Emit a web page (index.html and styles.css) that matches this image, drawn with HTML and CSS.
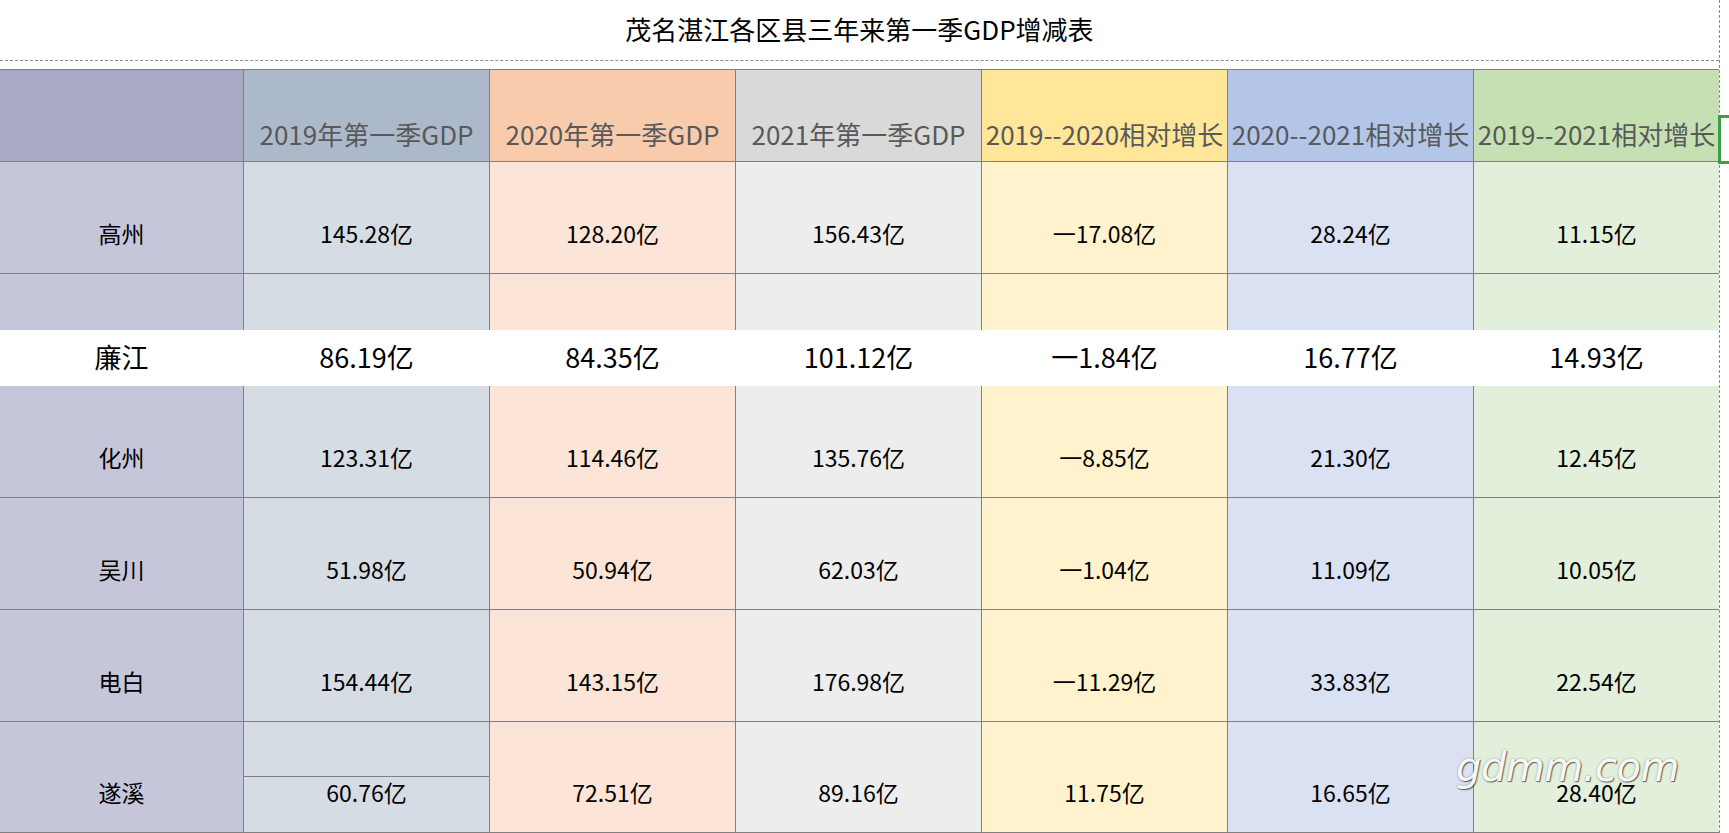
FILE: index.html
```html
<!DOCTYPE html>
<html lang="zh-CN">
<head>
<meta charset="utf-8">
<title>茂名湛江各区县三年来第一季GDP增减表</title>
<link rel="stylesheet" href="styles.css">
</head>
<body>
<div class="sheet">
  <div class="title">茂名湛江各区县三年来第一季GDP增减表</div>
  <div class="table">
    <div class="row head">
      <div class="cell c0"></div>
      <div class="cell c1">2019年第一季GDP</div>
      <div class="cell c2">2020年第一季GDP</div>
      <div class="cell c3">2021年第一季GDP</div>
      <div class="cell c4">2019--2020相对增长</div>
      <div class="cell c5">2020--2021相对增长</div>
      <div class="cell c6">2019--2021相对增长</div>
    </div>
    <div class="row data">
      <div class="cell c0">高州</div>
      <div class="cell c1">145.28亿</div>
      <div class="cell c2">128.20亿</div>
      <div class="cell c3">156.43亿</div>
      <div class="cell c4">一17.08亿</div>
      <div class="cell c5">28.24亿</div>
      <div class="cell c6">11.15亿</div>
    </div>
    <div class="row half">
      <div class="cell c0"></div>
      <div class="cell c1"></div>
      <div class="cell c2"></div>
      <div class="cell c3"></div>
      <div class="cell c4"></div>
      <div class="cell c5"></div>
      <div class="cell c6"></div>
    </div>
    <div class="band">
      <div class="bcell">廉江</div>
      <div class="bcell">86.19亿</div>
      <div class="bcell">84.35亿</div>
      <div class="bcell">101.12亿</div>
      <div class="bcell">一1.84亿</div>
      <div class="bcell">16.77亿</div>
      <div class="bcell">14.93亿</div>
    </div>
    <div class="row data">
      <div class="cell c0">化州</div>
      <div class="cell c1">123.31亿</div>
      <div class="cell c2">114.46亿</div>
      <div class="cell c3">135.76亿</div>
      <div class="cell c4">一8.85亿</div>
      <div class="cell c5">21.30亿</div>
      <div class="cell c6">12.45亿</div>
    </div>
    <div class="row data">
      <div class="cell c0">吴川</div>
      <div class="cell c1">51.98亿</div>
      <div class="cell c2">50.94亿</div>
      <div class="cell c3">62.03亿</div>
      <div class="cell c4">一1.04亿</div>
      <div class="cell c5">11.09亿</div>
      <div class="cell c6">10.05亿</div>
    </div>
    <div class="row data">
      <div class="cell c0">电白</div>
      <div class="cell c1">154.44亿</div>
      <div class="cell c2">143.15亿</div>
      <div class="cell c3">176.98亿</div>
      <div class="cell c4">一11.29亿</div>
      <div class="cell c5">33.83亿</div>
      <div class="cell c6">22.54亿</div>
    </div>
    <div class="row data last">
      <div class="cell c0">遂溪</div>
      <div class="cell c1 split">
        <div class="split-top"></div>
        <div class="split-val">60.76亿</div>
      </div>
      <div class="cell c2">72.51亿</div>
      <div class="cell c3">89.16亿</div>
      <div class="cell c4">11.75亿</div>
      <div class="cell c5">16.65亿</div>
      <div class="cell c6">28.40亿</div>
    </div>
  </div>
  <div class="select-box"></div>
  <div class="watermark">gdmm.com</div>
</div>
</body>
</html>
```

FILE: styles.css
```css
html, body {
  margin: 0;
  padding: 0;
  background: #ffffff;
}

body {
  width: 1729px;
  height: 833px;
  overflow: hidden;
  font-family: "Noto Sans CJK SC", "Noto Sans", sans-serif;
  color: #000;
}

.sheet {
  position: relative;
  width: 1719px;
  height: 833px;
  border-right: 1px dashed #8c8c8c;
}

.title {
  height: 61px;
  box-sizing: border-box;
  padding-bottom: 4px;
  display: flex;
  align-items: center;
  justify-content: center;
  font-size: 26px;
  color: #000;
  border-bottom: 1px dashed #8c8c8c;
  margin-bottom: 8px;
}

.table {
  border-top: 1px solid #808080;
}

.row {
  display: grid;
  grid-template-columns: 243px repeat(6, 245px);
  column-gap: 1px;
  background: #808080;
  border-bottom: 1px solid #808080;
}

.cell {
  display: flex;
  align-items: flex-end;
  justify-content: center;
  white-space: nowrap;
}

.head .cell {
  height: 91px;
  font-size: 26px;
  line-height: 34px;
  color: #595959;
  padding-bottom: 10px;
  box-sizing: border-box;
}

.head .c0 { background: #a9a9c5; }
.head .c1 { background: #acb9ca; }
.head .c2 { background: #f8cbad; }
.head .c3 { background: #d9d9d9; }
.head .c4 { background: #ffe699; }
.head .c5 { background: #b4c6e7; }
.head .c6 { background: #c6e0b4; }

.data .cell,
.half .cell {
  font-size: 23px;
  line-height: 30px;
  box-sizing: border-box;
}

.data .cell {
  height: 111px;
  padding-bottom: 25px;
}

.data.last .cell {
  height: 110px;
}

.half {
  border-bottom: none;
}

.half .cell {
  height: 56px;
}

.data .c0, .half .c0 { background: #c5c6d9; }
.data .c1, .half .c1 { background: #d6dce4; }
.data .c2, .half .c2 { background: #fce4d6; }
.data .c3, .half .c3 { background: #ededed; }
.data .c4, .half .c4 { background: #fff2cc; }
.data .c5, .half .c5 { background: #d9e1f2; }
.data .c6, .half .c6 { background: #e2efda; }

.data .cell.split {
  flex-direction: column;
  align-items: stretch;
  justify-content: space-between;
  padding-bottom: 0;
}

.split-top {
  height: 55px;
  border-bottom: 1px solid #808080;
}

.split-val {
  text-align: center;
  line-height: 30px;
  padding-bottom: 25px;
}

.band {
  display: grid;
  grid-template-columns: 243px repeat(6, 245px);
  column-gap: 1px;
  height: 56px;
  box-sizing: border-box;
  padding-bottom: 4px;
  background: #ffffff;
}

.bcell {
  display: flex;
  align-items: center;
  justify-content: center;
  font-size: 27px;
  white-space: nowrap;
}

.select-box {
  position: absolute;
  left: 1718px;
  top: 115px;
  width: 20px;
  height: 43px;
  border: 3px solid #3aa046;
  border-right: none;
}

.watermark {
  position: absolute;
  left: 1456px;
  top: 747px;
  font-family: "DejaVu Sans", sans-serif;
  font-style: italic;
  font-size: 40px;
  line-height: 40px;
  color: #f7f7f7;
  letter-spacing: -0.5px;
  text-shadow: 1px 1px 1px rgba(0, 0, 0, 0.55), 0 0 2px rgba(0, 0, 0, 0.35);
}
```
